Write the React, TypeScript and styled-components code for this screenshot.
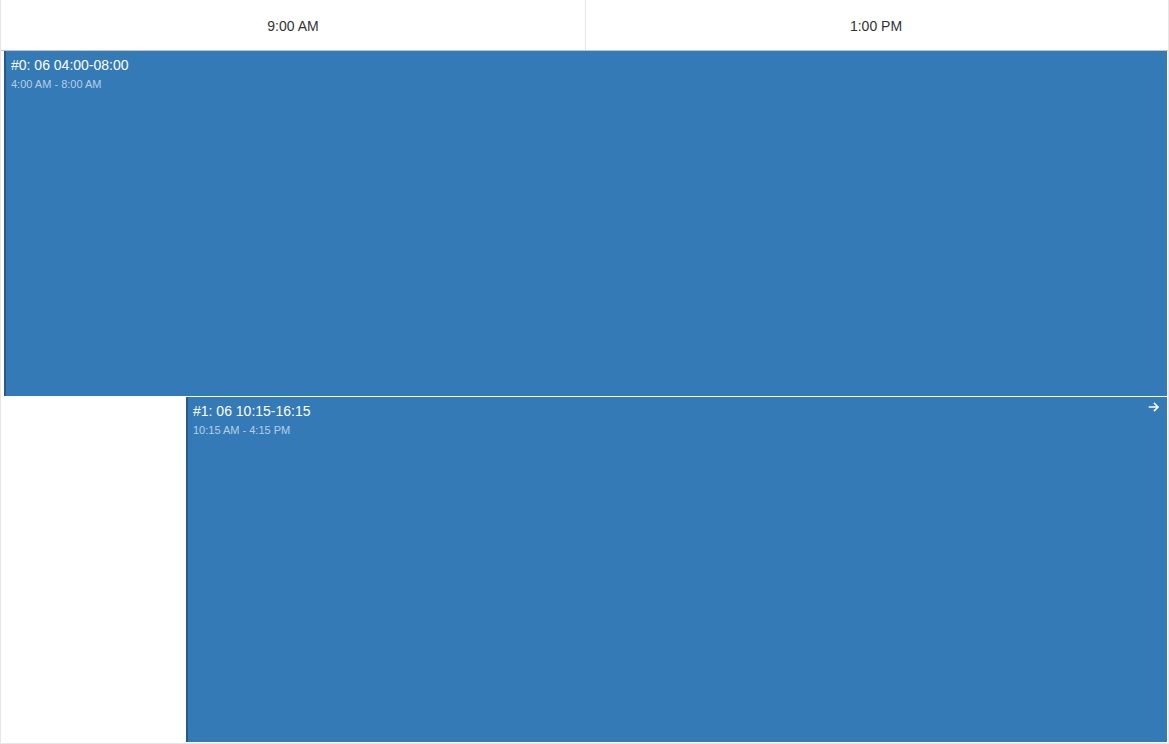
import React from "react";
import styled, { createGlobalStyle } from "styled-components";

const Global = createGlobalStyle`
  html, body { margin: 0; padding: 0; background: #fff; }
  body { font-family: "Liberation Sans", Arial, sans-serif; }
`;

const Frame = styled.div`
  width: 1169px;
  height: 744px;
  box-sizing: border-box;
  border: 1px solid #e6e6e6;
  border-top: none;
  display: flex;
  flex-direction: column;
  background: #fff;
`;

const Header = styled.div`
  display: grid;
  grid-template-columns: 585px 1fr;
  height: 50px;
  border-bottom: 1px solid #c4c4c4;
  flex: none;
`;

const HeaderCell = styled.div<{ $divider?: boolean }>`
  display: flex;
  align-items: center;
  justify-content: center;
  padding-top: 2px;
  padding-right: ${(p) => (p.$divider ? "0" : "2px")};
  font-size: 14px;
  color: #333;
  border-right: ${(p) => (p.$divider ? "1px solid #e6e6e6" : "none")};
`;

const Body = styled.div`
  display: flex;
  flex-direction: column;
  gap: 1px;
`;

const Row = styled.div<{ $offset: number }>`
  height: 345px;
  display: flex;
  padding-left: ${(p) => p.$offset}px;
  padding-right: 1px;
`;

const Event = styled.div`
  position: relative;
  flex: 1;
  box-sizing: border-box;
  background: #337ab7;
  border-left: 2px solid #265a88;
  padding: 6px 5px;
  color: #fff;
`;

const Title = styled.div`
  font-size: 14px;
  line-height: 17px;
`;

const Sub = styled.div`
  font-size: 11px;
  line-height: 13px;
  margin-top: 4px;
  color: rgba(255, 255, 255, 0.65);
`;

const Arrow = styled.svg`
  position: absolute;
  top: 4px;
  right: 7px;
  width: 12px;
  height: 12px;
`;

const events = [
  { offset: 3, title: "#0: 06 04:00-08:00", time: "4:00 AM - 8:00 AM", arrow: false },
  { offset: 185, title: "#1: 06 10:15-16:15", time: "10:15 AM - 4:15 PM", arrow: true },
];

export default function App() {
  return (
    <>
      <Global />
      <Frame>
        <Header>
          <HeaderCell $divider>9:00 AM</HeaderCell>
          <HeaderCell>1:00 PM</HeaderCell>
        </Header>
        <Body>
          {events.map((e) => (
            <Row key={e.title} $offset={e.offset}>
              <Event>
                <Title>{e.title}</Title>
                <Sub>{e.time}</Sub>
                {e.arrow && (
                  <Arrow viewBox="0 0 12 12" fill="none" stroke="#fff" strokeWidth="1.6" strokeLinecap="square">
                    <path d="M1.5 6h8.5M6.5 2.5L10 6l-3.5 3.5" />
                  </Arrow>
                )}
              </Event>
            </Row>
          ))}
        </Body>
      </Frame>
    </>
  );
}
